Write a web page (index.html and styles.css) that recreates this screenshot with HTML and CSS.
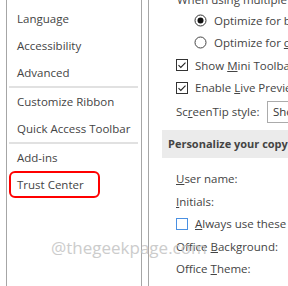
FILE: index.html
```html
<!DOCTYPE html>
<html>
<head>
<meta charset="utf-8">
<link rel="stylesheet" href="styles.css">
</head>
<body>
<div class="app">
  <nav class="nav">
    <div class="nav-item">Language</div>
    <div class="nav-item">Accessibility</div>
    <div class="nav-item">Advanced</div>
    <div class="nav-sep"></div>
    <div class="nav-item">Customize Ribbon</div>
    <div class="nav-item">Quick Access Toolbar</div>
    <div class="nav-sep"></div>
    <div class="nav-item">Add-ins</div>
    <div class="nav-item highlight">Trust Center</div>
  </nav>
  <main class="pane">
    <div class="rows">
      <div class="row first indent0">When using multiple displays:</div>
      <div class="row indent2">
        <svg class="radio" width="13" height="13" viewBox="0 0 13 13"><circle cx="6.5" cy="6.5" r="5.5" fill="#fff" stroke="#333" stroke-width="1"/><circle cx="6.5" cy="6.5" r="3" fill="#111"/></svg>
        <span>Optimize for best appearance</span>
      </div>
      <div class="row indent2">
        <svg class="radio" width="13" height="13" viewBox="0 0 13 13"><circle cx="6.5" cy="6.5" r="5.5" fill="#fff" stroke="#444" stroke-width="1"/></svg>
        <span>Optimize for <u>c</u>ompatibility</span>
      </div>
      <div class="row indent1">
        <svg class="check" width="12" height="12" viewBox="0 0 12 12"><rect x="0.5" y="0.5" width="11" height="11" fill="#fff" stroke="#333"/><path d="M2.5 6.2 L4.8 8.4 L9.5 3.6" fill="none" stroke="#222" stroke-width="1.1"/></svg>
        <span>Show <u>M</u>ini Toolbar on selection</span>
      </div>
      <div class="row indent1">
        <svg class="check" width="12" height="12" viewBox="0 0 12 12"><rect x="0.5" y="0.5" width="11" height="11" fill="#fff" stroke="#333"/><path d="M2.5 6.2 L4.8 8.4 L9.5 3.6" fill="none" stroke="#222" stroke-width="1.1"/></svg>
        <span>Enable <u>L</u>ive Preview</span>
      </div>
      <div class="row tall indent1">
        <span class="label">Sc<u>r</u>eenTip style:</span>
        <div class="select">Show feature descriptions in ScreenTips</div>
      </div>
      <div class="section">Personalize your copy of Microsoft Office</div>
      <div class="row indent1 after-section"><span><u>U</u>ser name:</span></div>
      <div class="row indent1"><span><u>I</u>nitials:</span></div>
      <div class="row indent1">
        <svg class="check" width="12" height="12" viewBox="0 0 12 12"><rect x="0.5" y="0.5" width="11" height="11" fill="#fff" stroke="#4a90e2"/></svg>
        <span><u>A</u>lways use these values regardless of sign in to Office.</span>
      </div>
      <div class="row indent1"><span>Office <u>B</u>ackground:</span></div>
      <div class="row indent1"><span>Office <u>T</u>heme:</span></div>
    </div>
  </main>
</div>
<div class="watermark">@thegeekpage.com</div>
</body>
</html>
```

FILE: styles.css
```css
html, body {
  margin: 0;
  padding: 0;
  background: #fff;
  overflow: hidden;
}
body {
  width: 288px;
  height: 286px;
  position: relative;
  font-family: "Open Sans", "Noto Sans", sans-serif;
  font-size: 11.5px;
  color: #444;
}
.app {
  display: flex;
  height: 286px;
}
.nav {
  margin-left: 6px;
  width: 134px;
  border-left: 1px solid #a6a6a6;
  border-right: 1px solid #a6a6a6;
  padding-top: 5px;
  flex-shrink: 0;
}
.nav-item {
  height: 27px;
  line-height: 27px;
  padding-left: 10px;
  white-space: nowrap;
}
.nav-sep {
  height: 2px;
  margin: 0 3px 0 2px;
  background: #e1e1e1;
}
.nav-item.highlight {
  margin-left: 2px;
  width: 81px;
  height: 23px;
  line-height: 23px;
  padding-left: 6px;
  border: 2px solid #f00;
  border-radius: 6px;
}
.pane {
  margin-left: 6px;
  border-left: 1px solid #a6a6a6;
  flex: 1;
  overflow: hidden;
  padding-left: 13px;
}
.rows {
  margin-top: -11px;
}
.row {
  display: flex;
  align-items: center;
  height: 22.5px;
  white-space: nowrap;
}
.row.first {
  height: 20px;
}
.indent0 { padding-left: 15px; }
.indent1 { padding-left: 14px; }
.indent2 { padding-left: 32px; }
.radio, .check {
  flex-shrink: 0;
  margin-right: 7px;
}
.row.tall {
  height: 24px;
  margin-top: 0.5px;
}
.label {
  width: 91px;
  flex-shrink: 0;
}
.select {
  height: 20px;
  line-height: 20px;
  border: 1px solid #ababab;
  padding-left: 5px;
  flex-shrink: 0;
  color: #333;
}
.section {
  margin-top: 6px;
  height: 28px;
  line-height: 28px;
  background: #ebebeb;
  padding-left: 6px;
  font-weight: bold;
  font-size: 11px;
  white-space: nowrap;
  color: #444;
}
.row.after-section {
  margin-top: 10px;
}
u {
  text-decoration: underline;
  text-underline-offset: 1px;
}
.watermark {
  position: absolute;
  left: 51px;
  top: 236px;
  font-size: 17px;
  color: #c4c4c4;
  font-family: "Open Sans", sans-serif;
  opacity: 0.85;
  white-space: nowrap;
}
```
